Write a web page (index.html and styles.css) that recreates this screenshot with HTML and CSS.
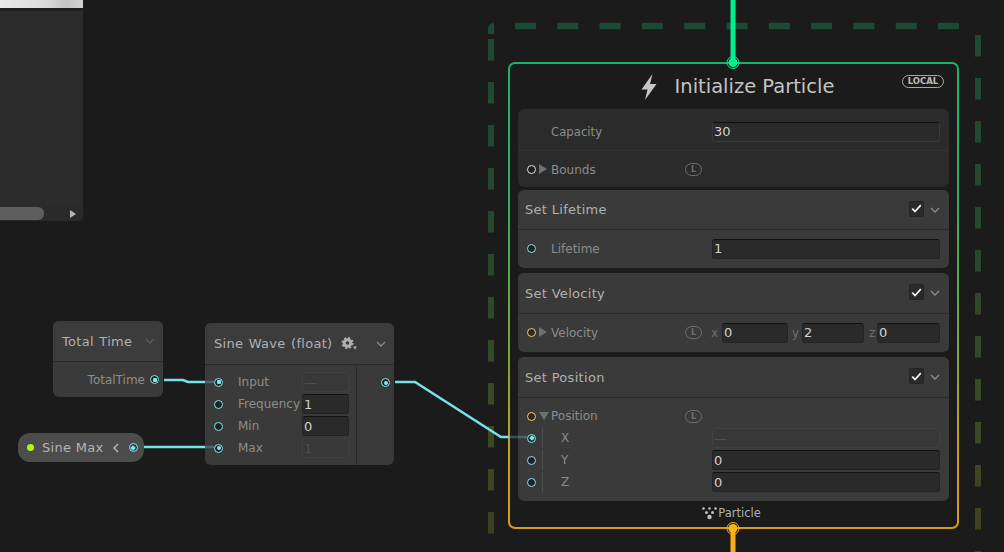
FILE: index.html
```html
<!DOCTYPE html>
<html lang="en">
<head>
<meta charset="utf-8">
<title>Particle graph</title>
<link rel="stylesheet" href="styles.css">
</head>
<body>
<main class="canvas">
  <section class="preview">
    <div class="preview-image"></div>
    <div class="preview-body"></div>
    <div class="preview-scroll">
      <div class="preview-thumb"></div>
      <div class="preview-arrow"></div>
    </div>
  </section>

  <svg class="dashes" width="1004" height="552" viewBox="0 0 1004 552" aria-hidden="true">
    <defs>
      <linearGradient id="dashGrad" gradientUnits="userSpaceOnUse" x1="0" y1="20" x2="0" y2="540">
        <stop offset="0" stop-color="#1d4a35"/>
        <stop offset="0.45" stop-color="#26482d"/>
        <stop offset="0.75" stop-color="#3a4a24"/>
        <stop offset="1" stop-color="#3f3f20"/>
      </linearGradient>
    </defs>
    <path class="dash-corner" d="M491 34V29a3.500 3.500 0 0 1 3-3.500"/>
    <path class="dash-h" d="M515 26H961"/>
    <path class="dash-v dash-left" d="M491 39V552"/>
    <path class="dash-v dash-right" d="M978 35V552"/>
  </svg>

  <article class="node time-node">
    <header class="node-head">
      <span class="node-title">Total Time</span>
      <svg class="chev chev-dim" width="10" height="6" viewBox="0 0 10 6"><path d="M1 1l4 4 4-4"/></svg>
    </header>
    <div class="time-row">
      <span class="label">TotalTime</span>
      <span class="port port-cyan port-square"></span>
    </div>
  </article>

  <article class="node sine-node">
    <header class="node-head sine-head">
      <span class="node-title">Sine Wave (float)</span>
      <svg class="gear" width="17" height="14" viewBox="0 0 17 14">
        <circle cx="6.500" cy="6" r="3.300" class="gear-ring"/>
        <circle cx="6.500" cy="6" r="5" class="gear-teeth"/>
        <path class="gear-arrow" d="M12 9.500h4l-2 3z"/>
      </svg>
      <svg class="chev" width="10" height="6" viewBox="0 0 10 6"><path d="M1 1l4 4 4-4"/></svg>
    </header>
    <div class="sine-body">
      <div class="sine-inputs">
        <div class="sine-row"><span class="port port-cyan port-square"></span><span class="label sine-label">Input</span><span class="field field-off">—</span></div>
        <div class="sine-row"><span class="port port-cyan"></span><span class="label sine-label">Frequency</span><span class="field">1</span></div>
        <div class="sine-row"><span class="port port-cyan"></span><span class="label sine-label">Min</span><span class="field">0</span></div>
        <div class="sine-row"><span class="port port-cyan port-dot"></span><span class="label sine-label">Max</span><span class="field field-off">1</span></div>
      </div>
      <div class="sine-output"><span class="port port-cyan port-dot"></span></div>
    </div>
  </article>

  <article class="param">
    <span class="param-dot"></span>
    <span class="param-name">Sine Max</span>
    <svg class="param-chev" width="6" height="10" viewBox="0 0 6 10"><path d="M5 1L1 5l4 4"/></svg>
    <span class="port port-cyan port-diamond"></span>
  </article>

  <article class="context">
    <header class="ctx-head">
      <svg class="bolt" width="18" height="28" viewBox="0 0 18 28"><path d="M12.500 1L1.500 16.500h6L5 27 16.500 11H10z"/></svg>
      <h1 class="ctx-title">Initialize Particle</h1>
      <span class="local">LOCAL</span>
    </header>

    <div class="block block-settings">
      <div class="row row-capacity">
        <span class="port-slot"></span><span class="twist"></span>
        <span class="label row-label">Capacity</span>
        <span class="badge-slot"></span>
        <span class="field field-wide field-flat">30</span>
      </div>
      <div class="row row-bounds">
        <span class="port port-white"></span><span class="twist twist-right"></span>
        <span class="label row-label">Bounds</span>
        <span class="badge">L</span>
      </div>
    </div>

    <section class="block block-titled">
      <header class="block-head block-head-short">
        <span class="block-title">Set Lifetime</span>
        <span class="check"><svg width="11" height="9" viewBox="0 0 11 9"><path d="M1.200 4.500l2.800 3L9.800 1.200"/></svg></span>
        <svg class="chev" width="10" height="6" viewBox="0 0 10 6"><path d="M1 1l4 4 4-4"/></svg>
      </header>
      <div class="row row-prop">
        <span class="port port-cyan"></span><span class="twist"></span>
        <span class="label row-label">Lifetime</span>
        <span class="badge-slot"></span>
        <span class="field field-wide">1</span>
      </div>
    </section>

    <section class="block block-titled">
      <header class="block-head">
        <span class="block-title">Set Velocity</span>
        <span class="check"><svg width="11" height="9" viewBox="0 0 11 9"><path d="M1.200 4.500l2.800 3L9.800 1.200"/></svg></span>
        <svg class="chev" width="10" height="6" viewBox="0 0 10 6"><path d="M1 1l4 4 4-4"/></svg>
      </header>
      <div class="row row-prop">
        <span class="port port-yellow"></span><span class="twist twist-right"></span>
        <span class="label row-label">Velocity</span>
        <span class="badge">L</span>
        <span class="axis axis-x">x</span><span class="field field-x">0</span>
        <span class="axis axis-y">y</span><span class="field field-y">2</span>
        <span class="axis axis-z">z</span><span class="field field-z">0</span>
      </div>
    </section>

    <section class="block block-position">
      <header class="block-head">
        <span class="block-title">Set Position</span>
        <span class="check"><svg width="11" height="9" viewBox="0 0 11 9"><path d="M1.200 4.500l2.800 3L9.800 1.200"/></svg></span>
        <svg class="chev" width="10" height="6" viewBox="0 0 10 6"><path d="M1 1l4 4 4-4"/></svg>
      </header>
      <div class="pos-rows">
        <div class="row row-pos">
          <span class="port port-yellow"></span><span class="twist twist-down"></span>
          <span class="label row-label">Position</span>
          <span class="badge">L</span>
        </div>
        <div class="row row-pos">
          <span class="port port-cyan port-diamond"></span><span class="bar"></span>
          <span class="label sub-label">X</span>
          <span class="field field-wide field-off">—</span>
        </div>
        <div class="row row-pos">
          <span class="port port-cyan"></span><span class="bar"></span>
          <span class="label sub-label">Y</span>
          <span class="field field-wide">0</span>
        </div>
        <div class="row row-pos">
          <span class="port port-cyan"></span><span class="bar"></span>
          <span class="label sub-label">Z</span>
          <span class="field field-wide">0</span>
        </div>
      </div>
    </section>

    <footer class="ctx-foot">
      <svg class="dots" width="15" height="13" viewBox="0 0 15 13">
        <circle cx="1.500" cy="1.500" r="1.300"/><circle cx="7.500" cy="1.500" r="1.300"/><circle cx="13.500" cy="1.500" r="1.300"/>
        <circle cx="4.500" cy="5.500" r="1.500"/><circle cx="10.500" cy="5.500" r="1.500"/>
        <circle cx="7.500" cy="10" r="2.200"/>
      </svg>
      <span class="foot-text">Particle</span>
    </footer>
  </article>

  <svg class="edges" width="1004" height="552" viewBox="0 0 1004 552" aria-hidden="true">
    <path class="flow flow-in" d="M733 0V62"/>
    <path class="flow flow-out" d="M733 528V552"/>
    <circle class="anchor anchor-in" cx="733" cy="62.500" r="4.500"/>
    <circle class="anchor-ring ring-in" cx="733" cy="62.500" r="6"/>
    <circle class="anchor anchor-out" cx="733" cy="528.500" r="4.500"/>
    <circle class="anchor-ring ring-out" cx="733" cy="528.500" r="6"/>
    <path class="wire" d="M164 380H183L188 382H205"/>
    <path class="wire" d="M144 447H205"/>
    <path class="wire" d="M395 382H415L501 437H509"/>
    <path class="wire-dim" d="M205 382H214"/>
    <path class="wire-dim" d="M205 447H214"/>
    <path class="wire-dim" d="M509 437H527"/>
  </svg>
</main>
</body>
</html>
```
FILE: styles.css
```css
* { box-sizing: border-box; }
html, body { margin: 0; padding: 0; background: #1b1b1b; }
body { font-family: "DejaVu Sans", sans-serif; }

.canvas {
  position: relative;
  width: 1004px;
  height: 552px;
  overflow: hidden;
  background: #1b1b1b;
}

/* preview panel */
.preview {
  position: absolute;
  left: 0;
  top: 0;
  width: 83px;
  height: 221px;
  display: flex;
  flex-direction: column;
  background: #2c2c2c;
  border-bottom-right-radius: 4px;
  overflow: hidden;
}
.preview-image {
  height: 8px;
  background: linear-gradient(90deg, #e8e8e8 0%, #dcdcdc 50%, #c4c4c4 80%, #d2d2d2 100%);
}
.preview-body {
  flex: 1;
  border-top: 3px solid #1f1f1f;
  background: #2c2c2c;
}
.preview-scroll {
  height: 15px;
  padding: 1px 0;
  display: flex;
  align-items: center;
  justify-content: space-between;
  background: #2a2a2a;
}
.preview-thumb {
  width: 44px;
  height: 13px;
  background: #5e5e5e;
  border-radius: 0 6px 6px 0;
}
.preview-arrow {
  width: 0;
  height: 0;
  margin-right: 7px;
  border-left: 6px solid #b4b4b4;
  border-top: 4.500px solid transparent;
  border-bottom: 4.500px solid transparent;
}

/* overlay drawings */
.dashes, .edges {
  position: absolute;
  left: 0;
  top: 0;
  fill: none;
}
.edges { pointer-events: none; }
.dash-h, .dash-v, .dash-corner {
  stroke: url(#dashGrad);
  stroke-width: 6;
}
.dash-h { stroke: #1d4a35; stroke-width: 6.500; stroke-dasharray: 21 21.300; }
.dash-v { stroke-dasharray: 21.500 21.500; }
.dash-corner { stroke: #1d4a35; }

.flow { stroke-width: 5; }
.flow-in { stroke: #00f08c; }
.flow-out { stroke: #f9ad1c; }
.anchor-in { fill: #00f08c; }
.anchor-out { fill: #fbb01f; }
.anchor-ring { stroke-width: 1; }
.ring-in { stroke: #00f08c; }
.ring-out { stroke: #f9ad1c; }
.wire { stroke: #74e2e6; stroke-width: 2.500; fill: none; }
.wire-dim { stroke: #74e2e6; stroke-opacity: .28; stroke-width: 2.500; fill: none; }

/* text */
.label { font-size: 12px; color: #8c8c8c; white-space: nowrap; }
.node-title { font-size: 13px; color: #b0b0b0; white-space: nowrap; letter-spacing: .3px; word-spacing: 1px; }

/* ports */
.port {
  flex: none;
  position: relative;
  display: block;
  width: 9px;
  height: 9px;
  border: 1px solid #7ce8ec;
  border-radius: 50%;
  background: #222;
}
.port-cyan { border-color: #7ce8ec; }
.port-white { border-color: #e4e4e4; background: #1e1e1e; }
.port-yellow { border-color: #f5cc5a; background: #2a2a2a; }
.port-dot::after, .port-square::after, .port-diamond::after {
  content: "";
  position: absolute;
  left: 1.500px;
  top: 1.500px;
  width: 4px;
  height: 4px;
  background: #7ce8ec;
  border-radius: 50%;
}
.port-square::after { border-radius: 1px; }
.port-diamond::after { transform: rotate(45deg); border-radius: 0; }

/* fields */
.field {
  flex: none;
  display: flex;
  align-items: center;
  width: 47px;
  height: 20px;
  padding-left: 1px;
  font-size: 13px;
  color: #d0d0d0;
  background: #2a2a2a;
  border: 1px solid #242424;
  border-top-color: #111;
  border-radius: 3px;
}
.field-off {
  color: #4e4e4e;
  background: #383838;
  border-color: #414141;
}
.field-flat { background: #2a2a2a; border-color: #3a3a3a; border-top-color: #0f0f0f; }
.field-wide { width: 228px; margin-left: auto; }

/* chevrons */
.chev { flex: none; fill: none; stroke: #8c8c8c; stroke-width: 1.300; }
.chev-dim { stroke: #5a5a5a; }

/* nodes */
.node {
  position: absolute;
  background: #3a3a3a;
  border-radius: 6px;
  overflow: hidden;
}
.node-head {
  display: flex;
  align-items: center;
  background: #3c3c3c;
  border-bottom: 1px solid #2a2a2a;
}

.time-node { left: 53px; top: 321px; width: 110px; height: 76px; }
.time-node .node-head {
  height: 41px;
  padding: 0 8px 0 9px;
  justify-content: space-between;
}
.time-row {
  height: 35px;
  padding: 0 4px 0 0;
  display: flex;
  align-items: center;
  justify-content: flex-end;
  gap: 5px;
}

.sine-node { left: 205px; top: 323px; width: 189px; height: 142px; }
.sine-head { height: 42px; padding: 0 8px 0 9px; }
.sine-head .node-title { margin-right: auto; }
.gear { flex: none; margin-right: 18px; fill: none; }
.gear-ring { stroke: #b0b0b0; stroke-width: 3; }
.gear-teeth { stroke: #b0b0b0; stroke-width: 2; stroke-dasharray: 2 1.930; }
.gear-arrow { fill: #b0b0b0; }
.sine-body { display: flex; height: 100px; }
.sine-inputs {
  width: 152px;
  padding-top: 7px;
  display: flex;
  flex-direction: column;
  gap: 2px;
  border-right: 1px solid #2a2a2a;
}
.sine-row {
  display: flex;
  align-items: center;
  height: 20px;
  padding-left: 9px;
}
.sine-label { width: 64px; margin-left: 15px; }
.sine-output { flex: 1; padding: 13px 0 0 24px; }

/* parameter pill */
.param {
  position: absolute;
  left: 18px;
  top: 433px;
  width: 126px;
  height: 29px;
  display: flex;
  align-items: center;
  padding-left: 9px;
  background: #4c4c4c;
  border-radius: 12px;
}
.param-dot { width: 7px; height: 7px; border-radius: 50%; background: #b4f41e; flex: none; }
.param-name { margin-left: 8px; font-size: 13px; color: #b4b4b4; white-space: nowrap; letter-spacing: .3px; }
.param-chev { flex: none; margin-left: 9px; fill: none; stroke: #c0c0c0; stroke-width: 1.300; }
.param .port { margin-left: 10px; background: #333; }

/* context */
.context {
  position: absolute;
  left: 508px;
  top: 62px;
  width: 451px;
  height: 467px;
  padding: 0 8px;
  display: flex;
  flex-direction: column;
  border: 2px solid transparent;
  border-radius: 7px;
  background:
    linear-gradient(#1b1b1b, #1b1b1b) padding-box,
    linear-gradient(180deg, #1cb26e 0%, #2fae5c 30%, #84a52f 66%, #c29f21 80%, #d89c1c 100%) border-box;
}
.ctx-head {
  position: relative;
  height: 45px;
  display: flex;
  align-items: center;
  justify-content: center;
  gap: 17px;
  flex: none;
  padding-left: 7px;
}
.bolt { flex: none; fill: #c6c6c6; }
.ctx-title {
  margin: 0;
  font-size: 19.500px;
  font-weight: 400;
  color: #c4c4c4;
  white-space: nowrap;
}
.local {
  position: absolute;
  right: 5px;
  top: 11px;
  width: 42px;
  height: 13px;
  font-size: 8.500px;
  font-weight: 700;
  line-height: 11px;
  text-align: center;
  color: #bcbcbc;
  border: 1px solid #a8a8a8;
  border-radius: 7px;
}

.block {
  flex: none;
  background: #3a3a3a;
  border-radius: 6px;
  overflow: hidden;
}
.block-settings { background: #2b2b2b; margin-bottom: 3px; }
.block-titled { margin-bottom: 5px; height: 78px; }
.block-titled + .block-titled { height: 79px; }
.block-position { height: 144px; }
.block-head {
  height: 41px;
  padding: 0 9px 0 7px;
  display: flex;
  align-items: center;
  border-bottom: 1px solid #2a2a2a;
  background: #3a3a3a;
}
.block-head-short { height: 40px; }
.block-title { font-size: 13px; color: #b0b0b0; letter-spacing: .3px; white-space: nowrap; margin-right: auto; }
.check {
  flex: none;
  width: 15px;
  height: 16px;
  margin-bottom: 2px;
  display: flex;
  align-items: center;
  justify-content: center;
  background: #2a2a2a;
  border: 1px solid #242424;
  border-radius: 2px;
}
.check svg { fill: none; stroke: #f0f0f0; stroke-width: 1.800; }
.block-head .chev { margin-left: 6px; }

.row {
  display: flex;
  align-items: center;
  padding: 0 9px;
}
.row-capacity { height: 42px; padding-top: 4px; border-bottom: 1px solid #333; }
.row-capacity .row-label { font-size: 11.700px; }
.row-bounds { height: 36px; padding-top: 1px; }
.row-prop { height: 37px; }
.pos-rows { padding-top: 7px; display: flex; flex-direction: column; gap: 0; }
.row-pos { height: 22px; }
.port-slot { flex: none; width: 9px; }
.twist { flex: none; width: 8px; height: 0; margin: 0 4px 0 3px; }
.twist-right {
  height: 10px;
  border-left: 8px solid #707070;
  border-top: 5px solid transparent;
  border-bottom: 5px solid transparent;
  margin-top: -1px;
}
.twist-down {
  width: 10px;
  height: 8px;
  margin: 0 2px 0 3px;
  border-top: 8px solid #707070;
  border-left: 5px solid transparent;
  border-right: 5px solid transparent;
}
.row-label { width: 134px; flex: none; }
.badge-slot { width: 17px; flex: none; }
.badge {
  flex: none;
  width: 17px;
  height: 13px;
  font-size: 8px;
  font-weight: 700;
  line-height: 11px;
  text-align: center;
  color: #6e6e6e;
  border: 1px solid #6e6e6e;
  border-radius: 7px;
}
.bar { flex: none; width: 1px; height: 20px; margin-left: 6px; background: #505050; }
.sub-label { flex: none; margin-left: 18px; }
.axis { flex: none; font-size: 12px; color: #6e6e6e; }
.axis-x { margin-left: 9px; width: 11px; }
.axis-y { margin-left: 4px; width: 10px; }
.axis-z { margin-left: 5px; width: 8px; }
.field-x { width: 66px; }
.field-y { width: 62px; }
.field-z { width: 63px; }

.ctx-foot {
  flex: 1;
  display: flex;
  align-items: center;
  justify-content: center;
  gap: 1px;
  padding: 0 4px 2px 0;
}
.dots { flex: none; fill: #c0c0c0; }
.foot-text { font-size: 11.500px; color: #b0b0b0; }
```
